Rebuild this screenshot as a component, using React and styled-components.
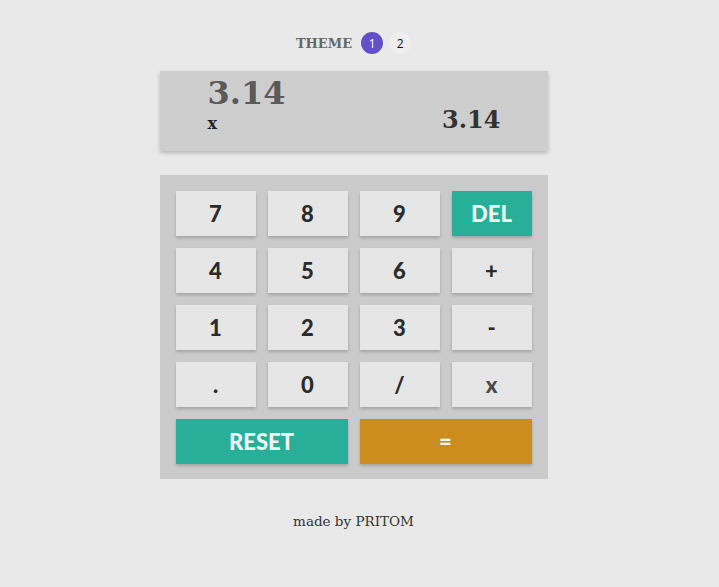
import React from "react";
import styled, { createGlobalStyle } from "styled-components";

const Global = createGlobalStyle`
  body {
    margin: 0;
    background: #e9e9e9;
    font-family: "DejaVu Serif", serif;
  }
`;

const keys = [
  { label: "7" }, { label: "8" }, { label: "9" }, { label: "DEL", kind: "del" },
  { label: "4" }, { label: "5" }, { label: "6" }, { label: "+" },
  { label: "1" }, { label: "2" }, { label: "3" }, { label: "-" },
  { label: "." }, { label: "0" }, { label: "/" }, { label: "x", kind: "soft" },
  { label: "RESET", kind: "del", wide: true }, { label: "=", kind: "equal", wide: true },
];

const App = () => {
  return (
    <Page>
      <Global />
      <Column>
        <ThemeRow>
          <ThemeLabel>THEME</ThemeLabel>
          <ThemeDot active>1</ThemeDot>
          <ThemeDot>2</ThemeDot>
        </ThemeRow>
        <Display>
          <Previous>
            <PrevValue>3.14</PrevValue>
            <Operator>x</Operator>
          </Previous>
          <Current>3.14</Current>
        </Display>
        <Keypad>
          {keys.map((k) => (
            <Key key={k.label} kind={k.kind} wide={k.wide}>
              {k.label}
            </Key>
          ))}
        </Keypad>
        <Footer>made by PRITOM</Footer>
      </Column>
    </Page>
  );
};

export default App;

const Page = styled.div`
  min-height: 587px;
  padding-right: 12px;
  box-sizing: border-box;
`;

const Column = styled.div`
  width: 388px;
  margin: 0 auto;
  display: flex;
  flex-direction: column;
  padding-top: 32px;
`;

const ThemeRow = styled.div`
  display: flex;
  align-items: center;
  justify-content: center;
  gap: 6px;
  height: 22px;
`;

const ThemeLabel = styled.span`
  font-weight: bold;
  font-size: 13px;
  color: #666;
  margin-right: 3px;
`;

const ThemeDot = styled.span`
  width: 22px;
  height: 22px;
  border-radius: 50%;
  display: flex;
  align-items: center;
  justify-content: center;
  font-family: "Open Sans", sans-serif;
  font-size: 12px;
  color: ${(p) => (p.active ? "#fff" : "#111")};
  background: ${(p) => (p.active ? "#6150c8" : "#eeeeee")};
`;

const Display = styled.div`
  margin-top: 17px;
  height: 80px;
  background: #cecece;
  box-shadow: 0 2px 4px rgba(0, 0, 0, 0.22);
  display: flex;
  justify-content: space-between;
  align-items: flex-start;
  padding: 0 47px 0 48px;
  box-sizing: border-box;
`;

const Previous = styled.div`
  display: flex;
  flex-direction: column;
  padding-top: 4px;
`;

const PrevValue = styled.div`
  font-weight: bold;
  font-size: 32px;
  line-height: 36px;
  color: #5a5a5a;
`;

const Operator = styled.div`
  font-weight: bold;
  font-size: 16px;
  line-height: 16px;
  color: #222;
  margin-top: 5px;
`;

const Current = styled.div`
  font-weight: bold;
  font-size: 24px;
  line-height: 28px;
  color: #333;
  margin-top: 35px;
`;

const Keypad = styled.div`
  margin-top: 24px;
  background: #cbcbcb;
  display: grid;
  grid-template-columns: repeat(4, 80px);
  grid-auto-rows: 45px;
  gap: 12px;
  padding: 16px 15px 15px 16px;
`;

const keyBg = { del: "#29ae99", equal: "#cd8d1e" };

const Key = styled.div`
  grid-column: ${(p) => (p.wide ? "span 2" : "auto")};
  background: ${(p) => keyBg[p.kind] || "#e6e6e6"};
  color: ${(p) => (p.kind === "del" || p.kind === "equal" ? "#eef5f3" : p.kind === "soft" ? "#4a4a4a" : "#2b2b2b")};
  box-shadow: 0 2px 3px rgba(0, 0, 0, 0.2);
  display: flex;
  align-items: center;
  justify-content: center;
  font-family: "Lato", "Open Sans", sans-serif;
  font-weight: 900;
  font-size: 22px;
`;

const Footer = styled.div`
  margin-top: 34px;
  text-align: center;
  font-size: 13.5px;
  color: #333;
`;
